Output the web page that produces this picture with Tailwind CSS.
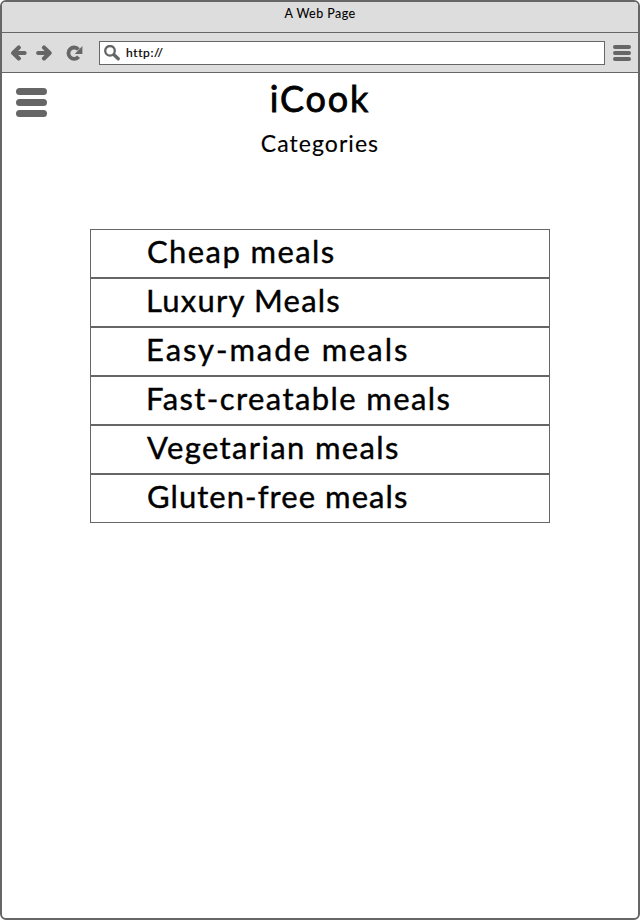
<!DOCTYPE html>
<html lang="en">
<head>
<meta charset="utf-8">
<title>A Web Page</title>
<script src="https://cdn.jsdelivr.net/npm/@tailwindcss/browser@4"></script>
</head>
<body class="bg-white text-black font-['Lato','Open_Sans',sans-serif]">
<div class="flex h-[920px] w-[640px] flex-col overflow-hidden rounded-[6px] border-2 border-[#666] bg-white">
  <header class="bg-[#ddd]">
    <div class="h-[31px] border-b border-[#666] text-center text-[12.5px] leading-[23px] tracking-[0.45px] [-webkit-text-stroke:0.1px_black]">A Web Page</div>
    <div class="flex h-10 items-center border-b border-[#666]">
      <svg class="ml-[8px] h-4 w-[17px] shrink-0" viewBox="0 0 17 16" fill="none" stroke="#666" stroke-width="4.2" stroke-linecap="round" stroke-linejoin="round"><path d="M14.6 8H4M8.8 2.6L3.2 8L8.8 13.4"/></svg>
      <svg class="ml-2 h-4 w-[17px] shrink-0" viewBox="0 0 17 16" fill="none" stroke="#666" stroke-width="4.2" stroke-linecap="round" stroke-linejoin="round"><path d="M3.2 8H13M9 2.6L14.6 8L9 13.4"/></svg>
      <svg class="ml-[14px] h-4 w-[17px] shrink-0" viewBox="0 0 17 16"><path d="M12.4 4.4A5.7 5.7 0 1 0 12.6 11.8" fill="none" stroke="#666" stroke-width="3.8"/><path d="M16.4 1V9H8.8Z" fill="#666"/></svg>
      <div class="ml-4 flex h-6 w-[506px] shrink-0 items-center border border-[#666] bg-white">
        <svg class="ml-[4px] h-4 w-4 shrink-0" viewBox="0 0 16 16" fill="none" stroke="#666"><circle cx="6" cy="5.8" r="4.8" stroke-width="2.3"/><path d="M10 9.8L14.2 13.8" stroke-width="3.3" stroke-linecap="round"/></svg>
        <span class="ml-[6px] pt-px text-[12px] leading-[22px] tracking-[0.62px] [-webkit-text-stroke:0.2px_black]">http://</span>
      </div>
      <div class="ml-2 flex w-[18px] flex-col gap-[2px]">
        <i class="h-1 rounded-full bg-[#666]"></i><i class="h-1 rounded-full bg-[#666]"></i><i class="h-1 rounded-full bg-[#666]"></i>
      </div>
    </div>
  </header>
  <main class="flex flex-col items-center">
    <div class="grid w-full grid-cols-[45px_1fr_45px] pt-[4px]">
      <div class="flex flex-col gap-[4px] pt-[10.5px] pl-[14px]">
        <i class="h-[7px] w-[31px] rounded-full bg-[#666]"></i><i class="h-[7px] w-[31px] rounded-full bg-[#666]"></i><i class="h-[7px] w-[31px] rounded-full bg-[#666]"></i>
      </div>
      <div class="text-center">
        <h1 class="text-[36px] leading-[42px] tracking-[1.9px] [-webkit-text-stroke:0.8px_black]">iCook</h1>
        <h2 class="mt-[8px] text-[23px] leading-[32px] tracking-[1.05px] [-webkit-text-stroke:0.15px_black]">Categories</h2>
      </div>
    </div>
    <ul class="mt-[70px] w-[460px] text-[31px] leading-[43px] [-webkit-text-stroke:0.4px_black]">
      <li class="h-[49px] border border-[#666] pl-[56px] tracking-[1.4px]">Cheap meals</li>
      <li class="h-[49px] border border-[#666] pl-[55px] tracking-[1.22px]">Luxury Meals</li>
      <li class="h-[49px] border border-[#666] pl-[55px] tracking-[1.93px]">Easy-made meals</li>
      <li class="h-[49px] border border-[#666] pl-[55px] tracking-[1.4px]">Fast-creatable meals</li>
      <li class="h-[49px] border border-[#666] pl-[56px] tracking-[1.36px]">Vegetarian meals</li>
      <li class="h-[49px] border border-[#666] pl-[56px] tracking-[1.05px]">Gluten-free meals</li>
    </ul>
  </main>
</div>
</body>
</html>
